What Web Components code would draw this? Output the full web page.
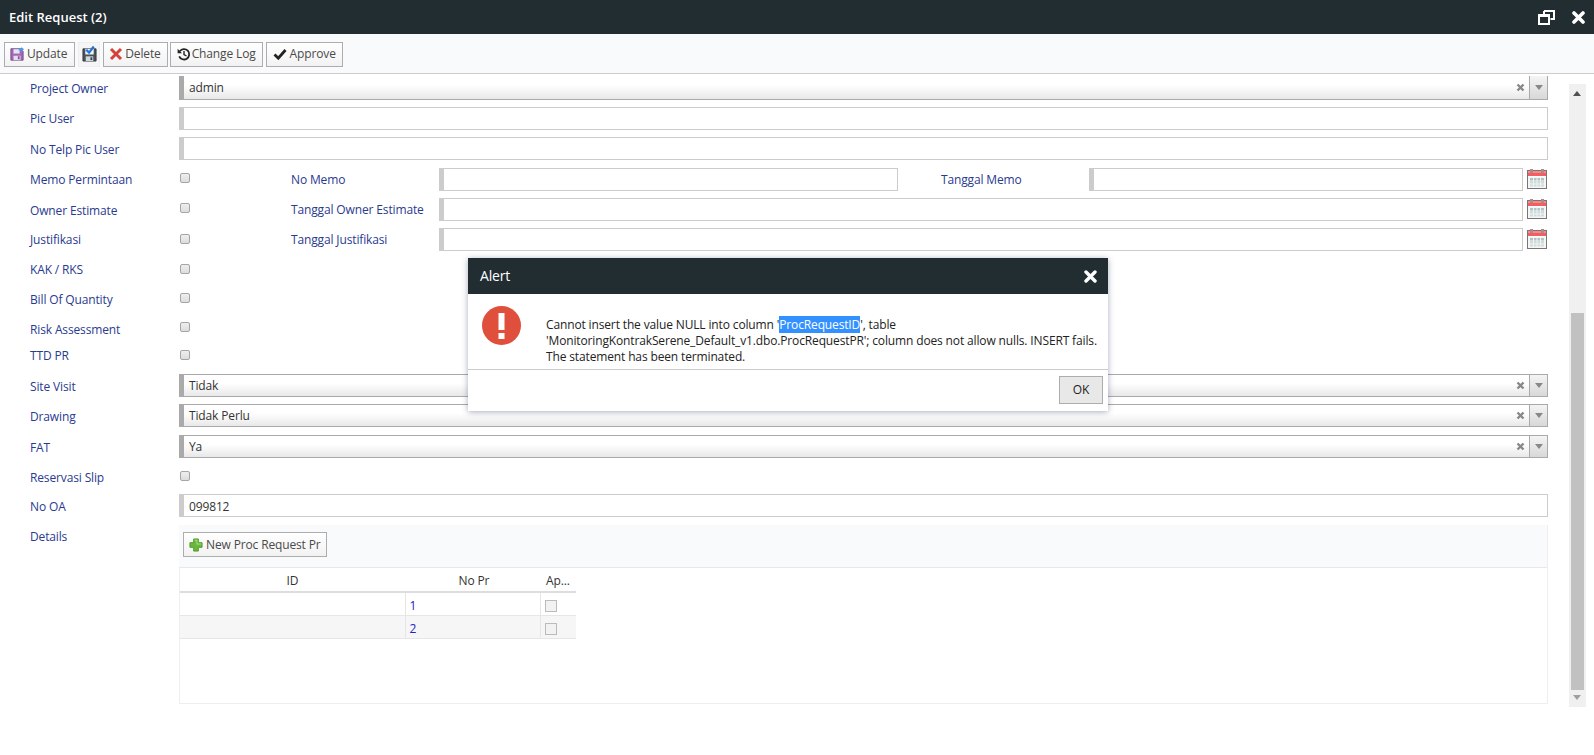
<!DOCTYPE html>
<html><head><meta charset="utf-8"><style>
html,body{margin:0;padding:0;height:755px;overflow:hidden;background:#fff;font:12px/16px "Open Sans",sans-serif;color:#333;letter-spacing:-.14px}
</style></head><body>
<x-app>
<x-titlebar slot="top">Edit Request (2)</x-titlebar>
<x-toolbar slot="top">
  <x-btn icon="update">Update</x-btn>
  <x-btn icon="save" plain></x-btn>
  <x-btn icon="delete">Delete</x-btn>
  <x-btn icon="log">Change Log</x-btn>
  <x-btn icon="check">Approve</x-btn>
</x-toolbar>
<x-form>
  <x-row h="31" d="1" label="Project Owner"><x-select value="admin" clip></x-select></x-row>
  <x-row h="30" label="Pic User"><x-input></x-input></x-row>
  <x-row h="31" d="1" label="No Telp Pic User"><x-input></x-input></x-row>
  <x-row h="30" label="Memo Permintaan"><x-triple><x-check></x-check><x-lbl>No Memo</x-lbl><x-input></x-input><x-lbl>Tanggal Memo</x-lbl><x-date></x-date></x-triple></x-row>
  <x-row h="30" d="1" label="Owner Estimate"><x-double><x-check></x-check><x-lbl>Tanggal Owner Estimate</x-lbl><x-date></x-date></x-double></x-row>
  <x-row h="29" c="6" label="Justifikasi"><x-double><x-check></x-check><x-lbl>Tanggal Justifikasi</x-lbl><x-date></x-date></x-double></x-row>
  <x-row h="31" d="1" c="7" label="KAK / RKS"><x-check></x-check></x-row>
  <x-row h="28" label="Bill Of Quantity"><x-check></x-check></x-row>
  <x-row h="28" d="2" c="6" label="Risk Assessment"><x-check></x-check></x-row>
  <x-row h="30" c="6" label="TTD PR"><x-check></x-check></x-row>
  <x-row h="30" d="1" label="Site Visit"><x-select value="Tidak"></x-select></x-row>
  <x-row h="31" d="1" label="Drawing"><x-select value="Tidak Perlu"></x-select></x-row>
  <x-row h="30" d="1" label="FAT"><x-select value="Ya"></x-select></x-row>
  <x-row h="29" d="1" c="6" label="Reservasi Slip"><x-check></x-check></x-row>
  <x-row h="31" d="1" label="No OA"><x-input value="099812"></x-input></x-row>
  <x-row h="179" label="Details"><x-details></x-details></x-row>
</x-form>
<x-scrollbar></x-scrollbar>
<x-dialog title="Alert"><span>Cannot insert the value NULL into column '<mark>ProcRequestID</mark>', table<br>'MonitoringKontrakSerene_Default_v1.dbo.ProcRequestPR'; column does not allow nulls. INSERT fails.<br>The statement has been terminated.</span></x-dialog>
</x-app>
<script>
const ICONS={
update:`<svg width="14" height="14" viewBox="0 0 16 16"><path d="M1 2h11l3 3v10H1z" fill="#a566b8" stroke="#6e4a86"/><rect x="4" y="2.500" width="7" height="5" fill="#dfe6f2"/><rect x="4" y="10" width="8" height="5" fill="#e8dcec"/><rect x="9" y="10.500" width="2" height="3.500" fill="#7d5a92"/><path d="M10 1h3V0l3 2.500L13 5V4h-3z" fill="#4a9be0"/></svg>`,
save:`<svg width="15" height="16" viewBox="0 0 16 17"><path d="M1 3h14v13H1z" fill="#4a5258" stroke="#33393e"/><rect x="4" y="11" width="8" height="5" fill="#cfd8dc"/><rect x="9" y="12" width="2" height="3" fill="#37474f"/><rect x="3.500" y="3" width="9" height="6" fill="#eef2f6"/><path d="M4.500 4l3 3 5-6.500" fill="none" stroke="#1e74d8" stroke-width="2.400"/></svg>`,
delete:`<svg width="14" height="14" viewBox="0 0 14 14"><path d="M2 2l10 10M12 2L2 12" stroke="#d4423a" stroke-width="3"/></svg>`,
log:`<svg width="14" height="14" viewBox="0 0 14 14"><path d="M2.800 4.200A5.200 5.200 0 1 1 2.200 9.300" fill="none" stroke="#222" stroke-width="1.800"/><path d="M.6 1.800v4.400H5z" fill="#222"/><path d="M7 4v3.500l2.500 1.500" fill="none" stroke="#222" stroke-width="1.400"/></svg>`,
check:`<svg width="14" height="12" viewBox="0 0 14 12"><path d="M1.500 6.500l3.800 3.700L12.500 2" fill="none" stroke="#222" stroke-width="2.800"/></svg>`,
plus:`<svg width="14" height="14" viewBox="0 0 15 15"><path d="M5 1h5v4h4v5h-4v4H5v-4H1V5h4z" fill="#69b83c" stroke="#4c9a2a"/><path d="M6 2h3v4h4v1H8V3H6z" fill="#a9e07e"/></svg>`};
function def(name,css,html,init){customElements.define(name,class extends HTMLElement{constructor(){super();this.attachShadow({mode:'open'})}
connectedCallback(){this.shadowRoot.innerHTML=`<style>${css}</style>`+(typeof html==='function'?html(this):html);init&&init(this)}})}
def('x-app',`:host{display:block;position:relative;width:1594px;height:755px;overflow:hidden}`,`<slot name="top"></slot><slot></slot>`);
def('x-titlebar',`:host{display:flex;align-items:center;justify-content:space-between;height:34px;background:#222d32;color:#fff;font:600 13px/20px "Open Sans",sans-serif;letter-spacing:0;padding:0 9px;box-sizing:border-box}
.i{display:flex;gap:17px;align-items:center}`,`<span><slot></slot></span><span class="i"><svg width="17" height="15" viewBox="0 0 17 15"><path d="M6 1h10v8h-3.500" fill="none" stroke="#fff" stroke-width="2"/><path d="M6 1v3.500" stroke="#fff" stroke-width="2"/><rect x="1" y="5" width="10" height="9" fill="none" stroke="#fff" stroke-width="2"/><rect x="0" y="4" width="12" height="3" fill="#fff"/></svg><svg width="13" height="13" viewBox="0 0 13 13"><path d="M2 2l9 9M11 2l-9 9" stroke="#fff" stroke-width="3.600" stroke-linecap="round"/></svg></span>`);
def('x-toolbar',`:host{display:flex;align-items:center;gap:3px;height:40px;box-sizing:border-box;background:#f9fafc;border-bottom:1px solid #ccc;padding:7px 0 6px 4px}`,`<slot></slot>`);
def('x-btn',`:host{display:inline-flex;align-items:center;gap:3px;height:25px;box-sizing:border-box;border:1px solid #adadad;background:linear-gradient(#fff,#f2f2f2);padding:0 7px 0 5px;color:#4a4a4a;font-size:12px;white-space:nowrap}
:host([plain]){border:1px solid #eee;background:#f5f5f5;padding:0;width:22px;justify-content:center}
:host([icon=delete]){gap:2px;padding-right:6px}
:host([icon=log]){gap:1px;padding:0 6px 0 6px;margin-left:-1px}
:host([icon=check]){gap:3px;padding:0 6px 0 6px}
:host([icon=plus]){gap:3px;padding-right:5px}
svg{display:block;flex:none}`,e=>ICONS[e.getAttribute('icon')]+`<slot></slot>`);
def('x-form',`:host{display:block;box-sizing:border-box;width:1548px;height:640px;overflow:hidden;padding:2px 0 0 30px}`,`<slot></slot>`);
def('x-row',`:host{display:grid;grid-template-columns:149px 1fr;align-items:start}
.l{color:#2a3a8f;line-height:24px;white-space:nowrap}`,e=>`<div class="l" style="margin-top:${e.getAttribute('d')||0}px">${e.getAttribute('label')}</div><div><slot></slot></div>`,e=>{e.style.height=e.getAttribute('h')+'px';if(e.hasAttribute('c'))e.style.setProperty('--cm',e.getAttribute('c')+'px')});
def('x-lbl',`:host{display:block;color:#2a3a8f;line-height:24px;white-space:nowrap}`,`<slot></slot>`);
def('x-input',`:host{display:block;height:23px;box-sizing:border-box;border:1px solid #ccc;border-left:5px solid #ccc;background:#fff;padding:0 0 0 5px;line-height:23px;color:#333;overflow:hidden;white-space:nowrap}`,e=>e.getAttribute('value')||'');
def('x-select',`:host{display:flex;height:23px;box-sizing:border-box;border:1px solid #aaa;border-left:5px solid #aaa;background:linear-gradient(#fff 40%,#e8e8e8);line-height:22px;color:#333;align-items:stretch}
:host([clip]){border-top:0;line-height:24px;height:24px}
.v{flex:1;padding-left:5px}.x{width:14px;display:flex;align-items:center;justify-content:center;padding-right:2px}
.a{width:17px;border-left:1px solid #aaa;display:flex;align-items:center;justify-content:center;background:linear-gradient(#f4f4f4,#d8d8d8)}
.t{width:0;height:0;border:4px solid transparent;border-top:5px solid #888;border-bottom:0}`,e=>`<span class="v">${e.getAttribute('value')}</span><span class="x"><svg width="9" height="9" viewBox="0 0 9 9"><path d="M1.500 1.500l6 6M7.500 1.500l-6 6" stroke="#888" stroke-width="2.400"/></svg></span><span class="a"><span class="t"></span></span>`);
def('x-check',`:host{display:block;width:10px;height:10px;box-sizing:border-box;margin-top:var(--cm,5px);border:1px solid #a5a5a5;border-radius:2px;background:linear-gradient(#eee,#ddd);margin-left:1px}`,``);
def('x-date',`:host{display:grid;grid-template-columns:1fr 21px;column-gap:4px}
svg{margin-top:1px;display:block}`,`<x-input></x-input><svg width="20" height="20" viewBox="0 0 20 20"><rect x="0" y="1" width="20" height="19" fill="#7c7472"/><rect x="1" y="2" width="18" height="6" fill="#f25f62"/><rect x="1" y="2" width="18" height="2" fill="#f8888a"/><rect x="1" y="7" width="18" height="1" fill="#fff"/><rect x="1" y="8" width="18" height="11" fill="#f4f6f6"/><rect x="3" y="9" width="14" height="8.500" fill="#cfdcdb"/><rect x="3" y="9" width="14" height="4" fill="#b4c3c2"/><path d="M6.500 9v9M10 9v9M13.500 9v9M3 12h14M3 15h14" stroke="#eef3f3" stroke-width="1"/><rect x="3" y="0" width="3" height="4" fill="#a98b8b"/><rect x="14" y="0" width="3" height="4" fill="#a98b8b"/></svg>`);
def('x-triple',`:host{display:grid;grid-template-columns:112px 148px 459px 43px 148px 1fr;align-items:start}`,`<slot></slot>`,e=>{const k=[...e.children];k[3].style.gridColumn='5'});
def('x-double',`:host{display:grid;grid-template-columns:112px 148px 1fr;align-items:start}`,`<slot></slot>`);
def('x-details',`:host{display:block;height:179px;box-sizing:border-box;border:1px solid #eee;border-top:0;background:#fff;font-size:12px}
.bar{height:43px;box-sizing:border-box;background:#f9fafc;border-bottom:1px solid #e8e8e8;padding:7px 0 0 4px;margin-left:-1px}
table{border-collapse:collapse;table-layout:fixed;width:396px;color:#333}
th{height:21px;box-sizing:content-box;font-weight:400;padding:2px 0 0;border-bottom:2px solid #ddd;text-align:center;white-space:nowrap}
th:nth-child(2){padding-left:3px}
td{height:23px;padding:5px 0 0 4px;box-sizing:border-box;vertical-align:top;border-bottom:1px solid #e6e6e6;border-right:1px solid #e6e6e6;color:#2222cc;line-height:16px}
tr:nth-child(2) td{background:#f6f6f6}
td:last-child{border-right:0}
.c{display:block;width:12px;height:12px;box-sizing:border-box;border:1px solid #bbb;background:#f2f2f2;margin:2px 0 0 0}
th:last-child{text-align:left;padding-left:6px}`,`<div class="bar"><x-btn icon="plus">New Proc Request Pr</x-btn></div>
<table><colgroup><col style="width:225px"><col style="width:135px"><col style="width:36px"></colgroup>
<thead><tr><th>ID</th><th>No Pr</th><th>Ap...</th></tr></thead>
<tbody><tr><td></td><td>1</td><td><span class="c"></span></td></tr><tr><td></td><td>2</td><td><span class="c"></span></td></tr></tbody></table>`);
def('x-scrollbar',`:host{position:absolute;left:1569px;top:84px;width:17px;height:623px;background:#f0f0f0}
.u,.d{position:absolute;left:4px;width:0;height:0;border:4px solid transparent}
.u{top:7px;border-bottom:5px solid #505050;border-top:0}.d{bottom:7px;border-top:5px solid #a0a0a0;border-bottom:0}
.th{position:absolute;left:2px;width:13px;top:229px;height:377px;background:#c1c1c1}`,`<div class="u"></div><div class="th"></div><div class="d"></div>`);
def('x-dialog',`:host{position:absolute;left:468px;top:258px;width:640px;height:153px;background:#fff;box-shadow:0 1px 6px rgba(60,70,110,.45);display:flex;flex-direction:column;color:#222}
.h{height:36px;flex:none;background:#222d32;color:#fff;display:flex;align-items:center;justify-content:space-between;padding:0 11px 0 12px;font:400 14px/20px "Open Sans",sans-serif;letter-spacing:-.2px}
.b{height:76px;flex:none;box-sizing:border-box;display:flex;border-bottom:1px solid #ccc;padding:12px 0 0 14px}
.b svg{flex:none;margin-right:25px}
.t{padding-top:11px;white-space:nowrap;line-height:16px}
.f{flex:1;display:flex;justify-content:flex-end;align-items:flex-start;padding:6px 5px 0 0}
.ok{width:44px;height:28px;box-sizing:border-box;border:1px solid #adadad;background:#e8e8e8;display:flex;align-items:center;justify-content:center;color:#222}`,e=>`<div class="h"><span>${e.getAttribute('title')}</span><svg width="13" height="13" viewBox="0 0 13 13"><path d="M2 2l9 9M11 2l-9 9" stroke="#fff" stroke-width="3.400" stroke-linecap="round"/></svg></div>
<div class="b"><svg width="39" height="39" viewBox="0 0 39 39"><circle cx="19.500" cy="19.500" r="19.500" fill="#e04e3c"/><rect x="16.500" y="7" width="6" height="17" fill="#fff"/><rect x="16.500" y="27" width="6" height="6" fill="#fff"/></svg><div class="t"><slot></slot></div></div>
<div class="f"><div class="ok">OK</div></div>`);
document.querySelector('mark').style.cssText='background:#3390ff;color:#fff';
</script>
</body></html>
